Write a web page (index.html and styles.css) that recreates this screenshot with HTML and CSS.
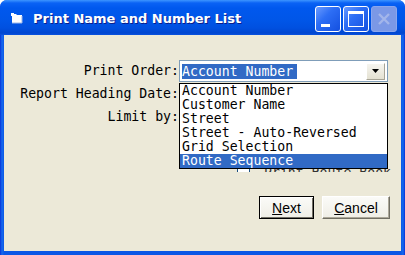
FILE: index.html
```html
<!DOCTYPE html>
<html lang="en">
<head>
    <meta charset="UTF-8">
    <title>Print Name and Number List</title>
    <link rel="stylesheet" href="styles.css">
</head>
<body>
<div class="window">
    <div class="titlebar">
        <svg class="app-icon" width="12" height="11" viewBox="0 0 12 11">
            <path d="M1 1h4l1 1h5v8H1z" fill="#fff"/>
            <path d="M1 10h10V3" fill="none" stroke="#9db6e8" stroke-width="1"/>
            <rect x="0" y="0" width="3" height="3" fill="#fff"/>
        </svg>
        <span class="title">Print Name and Number List</span>
        <div class="caption-buttons">
            <button class="cap-btn minimize"><span></span></button>
            <button class="cap-btn maximize"><span></span></button>
            <button class="cap-btn close" disabled>
                <svg width="16" height="16" viewBox="0 0 16 16">
                    <path d="M3 3l10 10M13 3L3 13" stroke="#a3b6ea" stroke-width="2.4"/>
                </svg>
            </button>
        </div>
    </div>

    <div class="content">
        <div class="form-grid">
            <label class="field-label">Print Order:</label>
            <div class="combo">
                <span class="combo-value"><span class="selected-text">Account Number</span></span>
                <span class="combo-arrow">
                    <svg width="7" height="4" viewBox="0 0 7 4"><path d="M0 0h7L3.5 4z" fill="#000"/></svg>
                </span>
            </div>

            <label class="field-label">Report Heading Date:</label>
            <div class="plain-input"></div>

            <label class="field-label">Limit by:</label>
            <div class="plain-input"></div>
        </div>

        <div class="check-row">
            <span class="checkbox"></span>
            <span class="check-label">Print Route Book</span>
        </div>

        <div class="button-row">
            <button class="push-btn default"><u>N</u>ext</button>
            <button class="push-btn"><u>C</u>ancel</button>
        </div>

        <!-- open dropdown of the Print Order combo -->
        <ul class="dropdown-list">
            <li>Account Number</li>
            <li>Customer Name</li>
            <li>Street</li>
            <li>Street - Auto-Reversed</li>
            <li>Grid Selection</li>
            <li class="active">Route Sequence</li>
        </ul>
    </div>
</div>
</body>
</html>
```

FILE: styles.css
```css
body {
    margin: 0;
    background-color: #ffffff;
}
.window {
    width: 405px;
    height: 255px;
    display: flex;
    flex-direction: column;
    background: linear-gradient(to right, #0831d9 0, #166aee 2px, #0b57e6 4px, #0b57e6 401px, #166aee 403px, #0831d9 405px);
    border-radius: 7px 7px 0 0;
    overflow: hidden;
}
.titlebar {
    height: 35px;
    flex-shrink: 0;
    display: flex;
    align-items: center;
    padding: 2px 8px 0 11px;
    box-sizing: border-box;
    background: linear-gradient(to bottom, #3d95ff 0, #0a62f5 3px, #0058ee 8px, #0056e8 20px, #0050e0 28px, #0046d0 33px, #0a53e0 35px);
}
.app-icon {
    margin-right: 10px;
}
.title {
    flex: 1;
    font-family: "DejaVu Sans", sans-serif;
    font-weight: bold;
    font-size: 13px;
    color: #ffffff;
    text-shadow: 1px 1px 0 #0a1e8c;
}
.caption-buttons {
    display: flex;
    gap: 2px;
}
.cap-btn {
    width: 26px;
    height: 26px;
    padding: 0;
    border: 1px solid #ffffff;
    border-radius: 3px;
    background: linear-gradient(135deg, #6a9bff 0, #2d6ef5 40%, #1450e0 100%);
    position: relative;
    box-sizing: border-box;
}
.minimize span {
    position: absolute;
    left: 5px;
    bottom: 4px;
    width: 9px;
    height: 3px;
    background-color: #ffffff;
}
.maximize span {
    position: absolute;
    left: 4px;
    top: 4px;
    width: 16px;
    height: 16px;
    border: 1px solid #ffffff;
    border-top-width: 3px;
    box-sizing: border-box;
}
.close {
    border-color: #8aa6ee;
    background: #7b98e6;
    display: flex;
    align-items: center;
    justify-content: center;
}
.content {
    flex: 1;
    margin: 0 4px 4px;
    background-color: #ece9d8;
    position: relative;
    display: flex;
    flex-direction: column;
    font-family: "DejaVu Sans Mono", monospace;
    font-size: 13.2px;
}
.form-grid {
    display: grid;
    grid-template-columns: 175px 209px;
    grid-auto-rows: 22px;
    row-gap: 1px;
    padding-top: 25px;
}
.field-label {
    text-align: right;
    align-self: center;
    color: #000000;
    line-height: 16px;
}
.combo {
    display: flex;
    align-items: center;
    background-color: #ffffff;
    border: 1px solid #7f9db9;
    box-sizing: border-box;
    padding: 0 2px 0 2px;
}
.combo-value {
    flex: 1;
}
.selected-text {
    background-color: #316ac5;
    color: #ffffff;
    line-height: 15px;
    display: inline-block;
    padding-right: 4px;
}
.combo-arrow {
    width: 19px;
    height: 17px;
    display: flex;
    align-items: center;
    justify-content: center;
    background: linear-gradient(#f6f5ef, #e4e1d2);
    border: 1px solid #ffffff;
    border-right-color: #a7a496;
    border-bottom-color: #a7a496;
    box-sizing: border-box;
}
.plain-input {
    background-color: #ffffff;
    border: 1px solid #7f9db9;
}
.check-row {
    display: flex;
    gap: 8px;
    align-items: flex-start;
    height: 7px;
    overflow: hidden;
    margin: 37px 0 0 233px;
}
.checkbox {
    width: 13px;
    height: 13px;
    background-color: #ffffff;
    border: 1px solid #1c5180;
    box-sizing: border-box;
}
.check-label {
    line-height: 16px;
    margin-left: 6px;
    color: #333333;
}
.button-row {
    margin-top: auto;
    padding: 0 11px 32px 0;
    display: flex;
    justify-content: flex-end;
    gap: 8px;
}
.push-btn {
    height: 23px;
    width: 68px;
    padding: 0;
    font-family: "Liberation Sans", Arial, sans-serif;
    font-size: 14px;
    color: #000000;
    background: linear-gradient(#fbfbf8, #efeee6);
    border: 1px solid;
    border-color: #ffffff #716f64 #716f64 #ffffff;
    box-shadow: inset -1px -1px 0 #aca899;
}
.push-btn.default {
    width: 55px;
    border: 1px solid #000000;
    box-shadow: inset 1px 1px 0 #ffffff, inset -1px -1px 0 #716f64;
}
.dropdown-list {
    position: absolute;
    left: 175px;
    top: 48px;
    width: 209px;
    margin: 0;
    padding: 0;
    list-style: none;
    background-color: #ffffff;
    border: 1px solid #000000;
    box-sizing: border-box;
}
.dropdown-list li {
    height: 14px;
    line-height: 14px;
    padding-left: 2px;
    color: #000000;
}
.dropdown-list li.active {
    background-color: #316ac5;
    color: #ffffff;
}
```
